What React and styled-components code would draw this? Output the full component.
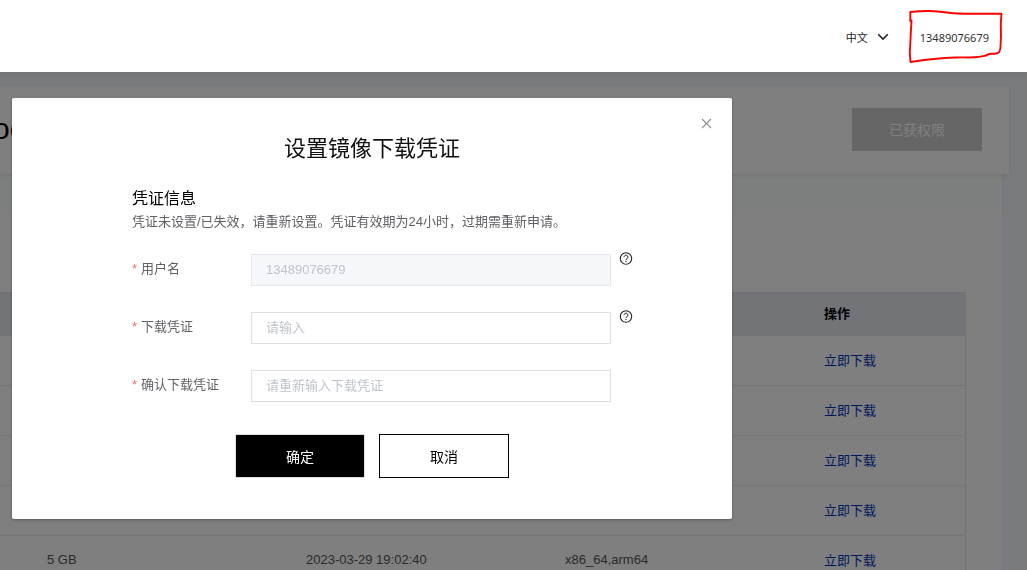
import { useState } from 'react';
import styled, { createGlobalStyle } from 'styled-components';

const GlobalStyle = createGlobalStyle`
  * {
    box-sizing: border-box;
  }

  body {
    margin: 0;
    overflow: hidden;
    background-color: #f5f7fc;
    color: #606266;
    font-family: "Liberation Sans", "Noto Sans CJK SC", sans-serif;
    font-size: 13px;
  }

  button, input {
    font-family: inherit;
  }
`;

const Header = styled.header`
  position: relative;
  z-index: 20;
  display: flex;
  align-items: center;
  justify-content: flex-end;
  gap: 20px;
  height: 72px;
  padding: 2px 27px 0 0;
  background-color: #ffffff;
`;

const LangButton = styled.button`
  display: flex;
  align-items: center;
  gap: 9px;
  padding: 0;
  border: none;
  background: none;
  color: #222222;
  font-size: 11px;
  cursor: pointer;
`;

const UserLink = styled.a`
  position: relative;
  display: flex;
  align-items: center;
  height: 52px;
  padding: 0 11px;
  color: #333333;
  font-family: "Noto Sans", sans-serif;
  font-size: 11px;
  text-decoration: none;

  svg {
    position: absolute;
    top: 0;
    left: 0;
    overflow: visible;
  }
`;

const Page = styled.main`
  padding-top: 14px;
  background-image: linear-gradient(rgba(0, 0, 0, 0.04), rgba(0, 0, 0, 0) 8px);
`;

const Hero = styled.section`
  position: relative;
  display: flex;
  align-items: flex-start;
  justify-content: space-between;
  height: 88px;
  margin-right: 18px;
  padding: 22px 27px 0 0;
  background-color: #ffffff;
  box-shadow: 0 1px 6px rgba(45, 47, 51, 0.1);

  h1 {
    margin: 0;
    color: #000000;
    font-size: 30px;
    font-weight: 400;
    line-height: 42px;
    text-indent: -7px;
  }
`;

const GrantedButton = styled.button`
  width: 130px;
  height: 43px;
  padding: 0 0 2px;
  border: 1px solid #d0d0d0;
  background-color: #cccccc;
  color: #ffffff;
  font-size: 14px;
`;

const TabBar = styled.div`
  height: 36px;
  margin-right: 25px;
  background-color: #fbfffd;
  box-shadow: 0 1px 5px rgba(45, 47, 51, 0.1);
`;

const Panel = styled.section`
  margin-right: 25px;
  padding: 82px 36px 0 0;
  background-color: #ffffff;
`;

const FileTable = styled.table`
  width: 100%;
  table-layout: fixed;
  border-collapse: separate;
  border-spacing: 0;
  border-right: 1px solid #e5e6ea;

  th, td {
    padding: 0 15px;
    text-align: left;
    white-space: nowrap;
  }

  th {
    height: 44px;
    padding-bottom: 4px;
    border-top: 1px solid #dcdee4;
    background-color: #e5e8f0;
    color: #000000;
  }

  td {
    height: 50px;
    padding-bottom: 2px;
    border-bottom: 1px solid #ebedf0;
    color: #555555;
  }

  th:first-child, td:first-child {
    width: 32px;
  }

  th:last-child, td:last-child {
    width: 156px;
  }

  a {
    color: #0033bb;
    text-decoration: none;
  }
`;

const Overlay = styled.div`
  position: fixed;
  inset: 72px 0 0;
  z-index: 10;
  padding: 26px 12px;
  background-color: rgba(0, 0, 0, 0.5);
`;

const Dialog = styled.div`
  position: relative;
  max-width: 720px;
  padding: 35px 98px 41px 120px;
  border-radius: 2px;
  background-color: #ffffff;
  box-shadow: 0 1px 3px rgba(0, 0, 0, 0.3);

  h2 {
    margin: 0 22px 23px 0;
    color: #111111;
    font-size: 22px;
    font-weight: 400;
    line-height: 32px;
    text-align: center;
  }

  h3 {
    margin: 0 0 2px;
    color: #000000;
    font-size: 16px;
    font-weight: 400;
    line-height: 22px;
  }

  p {
    margin: 0 0 20px;
    line-height: 20px;
  }
`;

const CloseButton = styled.button`
  position: absolute;
  top: 20px;
  right: 20px;
  display: flex;
  padding: 0;
  border: none;
  background: none;
  color: #909399;
  cursor: pointer;
`;

const Form = styled.form`
  display: flex;
  flex-direction: column;
  gap: 24px;
`;

const Field = styled.div`
  display: flex;
  align-items: flex-end;
  height: 34px;

  label {
    flex: 0 0 119px;
    line-height: 34px;
  }

  label::before {
    content: "*";
    margin-right: 4px;
    color: #f56c6c;
  }
`;

const TextInput = styled.input`
  flex: 0 1 360px;
  min-width: 0;
  height: 32px;
  padding: 0 14px 2px;
  border: 1px solid #dcdfe6;
  outline: none;
  background-color: #ffffff;
  color: #606266;
  font-size: 13px;

  &::placeholder {
    color: #c0c4cc;
  }

  &:disabled {
    border-color: #e4e7ed;
    background-color: #f5f7fa;
    color: #c0c4cc;
  }
`;

const HelpButton = styled.button`
  display: flex;
  align-self: flex-start;
  margin-left: 8px;
  padding: 0;
  border: none;
  background: none;
  color: #222222;
  cursor: help;
`;

const Actions = styled.div`
  display: flex;
  justify-content: center;
  gap: 14px;
  padding: 8px 22px 0 0;
`;

const ActionButton = styled.button`
  width: 130px;
  height: 44px;
  border: 1px solid ${(props) => (props.$primary ? '#dcdfe6' : '#000000')};
  background-color: ${(props) => (props.$primary ? '#000000' : '#ffffff')};
  color: ${(props) => (props.$primary ? '#ffffff' : '#000000')};
  font-size: 14px;
  cursor: pointer;
`;

const rows = [
  {},
  {},
  {},
  {},
  { size: '5 GB', time: '2023-03-29 19:02:40', arch: 'x86_64,arm64' },
];

const fields = [
  { id: 'username', label: '用户名', value: '13489076679', disabled: true, help: true },
  { id: 'credential', label: '下载凭证', placeholder: '请输入', type: 'password', help: true },
  { id: 'confirm', label: '确认下载凭证', placeholder: '请重新输入下载凭证', type: 'password' },
];

const HelpIcon = () => (
  <svg width="14" height="13" viewBox="0 0 14 13" fill="none" stroke="currentColor">
    <circle cx="7" cy="6.500" r="5.700" strokeWidth="1.100" />
    <path d="M5.100 5.100a1.900 1.900 0 1 1 3 1.500C7.400 7 7 7.300 7 8.100" />
    <path d="M7 9v1.100" strokeWidth="1.100" />
  </svg>
);

const CredentialDialog = ({ onClose }) => {
  const handleSubmit = (e) => {
    e.preventDefault();
    onClose();
  };

  return (
    <Overlay>
      <Dialog role="dialog" aria-modal="true" aria-labelledby="dialog-title">
        <CloseButton type="button" aria-label="Close" onClick={onClose}>
          <svg width="11" height="11" viewBox="0 0 11 11" stroke="currentColor" fill="none" strokeWidth="1.200">
            <path d="M1 1l9 9M10 1l-9 9" />
          </svg>
        </CloseButton>
        <h2 id="dialog-title">设置镜像下载凭证</h2>
        <h3>凭证信息</h3>
        <p>凭证未设置/已失效，请重新设置。凭证有效期为24小时，过期需重新申请。</p>
        <Form onSubmit={handleSubmit}>
          {fields.map((field) => (
            <Field key={field.id}>
              <label htmlFor={field.id}>{field.label}</label>
              <TextInput
                id={field.id}
                type={field.type || 'text'}
                defaultValue={field.value}
                placeholder={field.placeholder}
                disabled={field.disabled}
              />
              {field.help && (
                <HelpButton type="button" aria-label="Help">
                  <HelpIcon />
                </HelpButton>
              )}
            </Field>
          ))}
          <Actions>
            <ActionButton type="submit" $primary>确定</ActionButton>
            <ActionButton type="button" onClick={onClose}>取消</ActionButton>
          </Actions>
        </Form>
      </Dialog>
    </Overlay>
  );
};

const App = () => {
  const [open, setOpen] = useState(true);

  return (
    <>
      <GlobalStyle />
      <Header>
        <LangButton type="button">
          中文
          <svg width="12" height="8" viewBox="0 0 12 8" fill="none" stroke="currentColor" strokeWidth="1.6">
            <path d="M1.2 1.2L6 6l4.800-4.800" />
          </svg>
        </LangButton>
        <UserLink href="#user">
          13489076679
          <svg width="91" height="52" viewBox="0 0 91 52" fill="none" stroke="#ff0000" strokeWidth="1.9" strokeLinejoin="round" strokeLinecap="round">
            <path d="M1.300 10V1L10 .3C18-.2 24-.3 31 .7C41 2.200 50 3 60 2.700H92.500L91.800 12L92 25L91.500 36C91 41 90 42.500 86 42.700H82C79 42.700 79 44 76 44.700C68 47.500 60 46 46 46.500C34 47 18 48.500 1.500 51L.8 42L1.700 24L2.500 9.500" />
          </svg>
        </UserLink>
      </Header>
      <Page>
        <Hero>
          <h1>oo</h1>
          <GrantedButton type="button" disabled>已获权限</GrantedButton>
        </Hero>
        <TabBar />
        <Panel>
          <FileTable>
            <thead>
              <tr>
                <th />
                <th />
                <th />
                <th />
                <th>操作</th>
              </tr>
            </thead>
            <tbody>
              {rows.map((row, index) => (
                <tr key={index}>
                  <td />
                  <td>{row.size}</td>
                  <td>{row.time}</td>
                  <td>{row.arch}</td>
                  <td>
                    <a href="#download" onClick={() => setOpen(true)}>立即下载</a>
                  </td>
                </tr>
              ))}
            </tbody>
          </FileTable>
        </Panel>
      </Page>
      {open && <CredentialDialog onClose={() => setOpen(false)} />}
    </>
  );
};

export default App;
